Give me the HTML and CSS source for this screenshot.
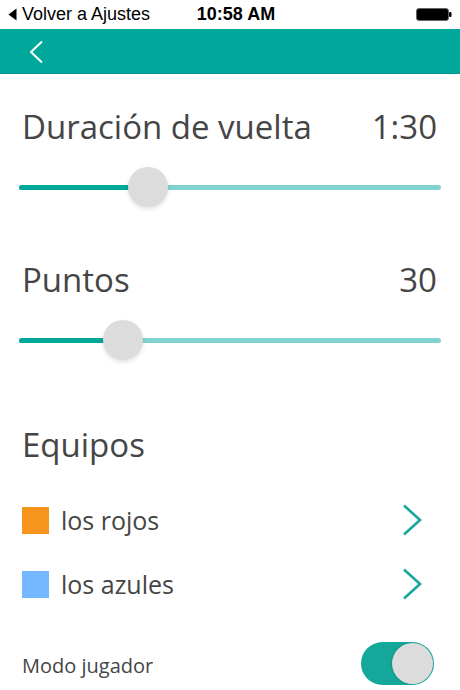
FILE: index.html
```html
<!DOCTYPE html>
<html lang="es">
<head>
<meta charset="utf-8">
<title>Ajustes</title>
<link rel="stylesheet" href="styles.css">
</head>
<body>
<div class="screen">
  <div class="status-bar">
    <div class="status-left">
      <svg class="back-tri" width="9" height="13" viewBox="0 0 9 13"><path d="M8.5 0.5 L0.5 6.5 L8.5 12.5 Z" fill="#000"/></svg>
      <span>Volver a Ajustes</span>
    </div>
    <div class="status-time">10:58 AM</div>
    <div class="status-right">
      <svg width="36" height="13" viewBox="0 0 36 13"><rect x="0.5" y="0.5" width="32" height="12" rx="2.5" fill="#000" stroke="#666" stroke-width="1"/><rect x="33" y="4" width="2.5" height="5" rx="1" fill="#000"/></svg>
    </div>
  </div>
  <div class="nav-bar">
    <svg class="nav-back" width="16" height="24" viewBox="0 0 16 24"><path d="M14 1.5 L3 12 L14 22.5" fill="none" stroke="#fff" stroke-width="2"/></svg>
  </div>
  <main class="content">
    <section class="setting">
      <div class="setting-head"><span>Duración de vuelta</span><span>1:30</span></div>
      <div class="slider">
        <div class="track"><div class="fill" style="width:129px"></div></div>
        <div class="thumb" style="left:109px"></div>
      </div>
    </section>
    <section class="setting setting-second">
      <div class="setting-head"><span>Puntos</span><span>30</span></div>
      <div class="slider">
        <div class="track"><div class="fill" style="width:104px"></div></div>
        <div class="thumb" style="left:84px"></div>
      </div>
    </section>
    <section class="teams">
      <h2 class="teams-title">Equipos</h2>
      <div class="team-row">
        <span class="swatch swatch-orange"></span>
        <span class="team-name">los rojos</span>
        <svg class="chev" width="20" height="32" viewBox="0 0 20 32"><path d="M2 1.5 L18 16 L2 30.5" fill="none" stroke="#14a89b" stroke-width="2.6"/></svg>
      </div>
      <div class="team-row">
        <span class="swatch swatch-blue"></span>
        <span class="team-name">los azules</span>
        <svg class="chev" width="20" height="32" viewBox="0 0 20 32"><path d="M2 1.5 L18 16 L2 30.5" fill="none" stroke="#14a89b" stroke-width="2.6"/></svg>
      </div>
    </section>
    <div class="player-row">
      <span class="player-label">Modo jugador</span>
      <div class="toggle"><div class="toggle-knob"></div></div>
    </div>
  </main>
</div>
</body>
</html>
```
FILE: styles.css
```css
* { box-sizing: border-box; }
html, body { margin: 0; padding: 0; background: #fff; }
body { width: 460px; height: 690px; overflow: hidden; }

.screen { display: flex; flex-direction: column; }

.status-bar {
  height: 29px;
  display: flex;
  align-items: center;
  justify-content: space-between;
  padding: 0 8px 0 8px;
  font-family: "Liberation Sans", Arial, sans-serif;
  font-size: 18px;
  color: #000;
}
.status-left { display: flex; align-items: center; gap: 5px; width: 170px; }
.status-time { font-weight: bold; margin-left: 12px; }
.status-right { width: 170px; display: flex; justify-content: flex-end; }

.nav-bar {
  height: 45px;
  background: #00a89c;
  border-bottom: 1px solid #06968b;
  display: flex;
  align-items: center;
  padding-left: 28px;
}
.nav-back { margin-top: 1px; }

.content {
  font-family: "Open Sans", sans-serif;
  color: #454545;
  padding: 0 19px;
}

.setting { padding-top: 33px; }
.setting-second { padding-top: 53px; }
.setting-head {
  display: flex;
  justify-content: space-between;
  font-size: 33px;
  line-height: 40px;
  padding: 0 4px 0 3px;
}
.slider {
  position: relative;
  height: 40px;
  margin-top: 20px;
  display: flex;
  align-items: center;
}
.track {
  width: 100%;
  height: 5px;
  border-radius: 3px;
  background: #7fd3cc;
  overflow: hidden;
}
.fill { height: 100%; background: #00a89c; }
.thumb {
  position: absolute;
  top: 0;
  width: 40px;
  height: 40px;
  border-radius: 50%;
  background: #dcdcdc;
  box-shadow: 0 2px 4px rgba(0,0,0,0.12);
}

.teams { padding-top: 65px; }
.teams-title {
  margin: 0;
  font-weight: normal;
  font-size: 33px;
  line-height: 40px;
  padding-left: 3px;
}
.team-row {
  height: 64px;
  display: flex;
  align-items: center;
  padding-left: 3px;
  padding-right: 19px;
}
.team-row:first-of-type { margin-top: 23px; }
.swatch { width: 27px; height: 27px; flex: none; }
.swatch-orange { background: #f7941d; }
.swatch-blue { background: #74b9ff; }
.team-name { font-size: 25px; margin-left: 12px; flex: 1; }
.chev { flex: none; }

.player-row {
  margin-top: 26px;
  height: 43px;
  display: flex;
  align-items: center;
  justify-content: space-between;
  padding-left: 3px;
  padding-right: 7px;
}
.player-label { font-size: 20px; padding-top: 3px; }
.toggle {
  width: 73px;
  height: 43px;
  border-radius: 22px;
  background: #14a89b;
  display: flex;
  align-items: center;
  justify-content: flex-end;
  padding: 1px;
}
.toggle-knob {
  width: 41px;
  height: 41px;
  border-radius: 50%;
  background: #dcdcdc;
  box-shadow: -1px 0 2px rgba(0,0,0,0.15);
}
```
